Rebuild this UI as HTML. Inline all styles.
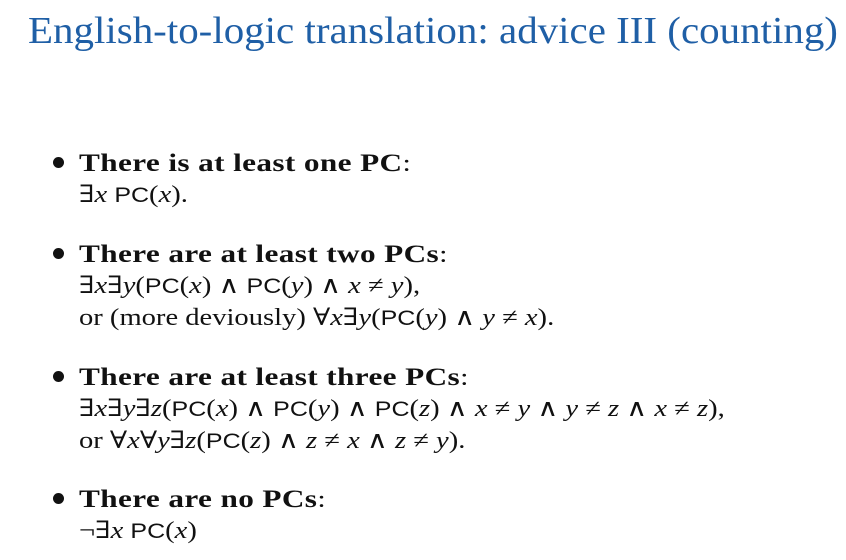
<!DOCTYPE html>
<html><head><meta charset="utf-8"><style>
body{margin:0;width:846px;height:560px;background:#fff;overflow:hidden;font-family:"Liberation Serif","DejaVu Serif",serif;color:#111;position:relative}
.t{position:absolute;left:28px;top:9px;font-size:38px;color:#1f5fa6;white-space:nowrap;transform:scaleX(1.078);transform-origin:left}
.l{position:absolute;left:79px;white-space:nowrap;font-size:24px;line-height:30px;transform:scaleX(1.19);transform-origin:left}
.hl{transform:scaleX(1.25)}
.h{font-size:25px;font-weight:bold;letter-spacing:0.3px}
.b{position:absolute;left:53px;width:11px;height:11px;border-radius:50%;background:#111}
i{font-style:italic}
.s{font-family:"Liberation Sans",sans-serif;font-size:21px}
</style></head><body>
<div class="t">English-to-logic translation: advice III (counting)</div>

<div class="b" style="top:157px"></div>
<div class="l hl" style="top:149px"><span class="h">There is at least one PC</span>:</div>
<div class="l" style="top:180px">∃<i>x</i> <span class="s">PC</span>(<i>x</i>).</div>

<div class="b" style="top:248px"></div>
<div class="l hl" style="top:240px"><span class="h">There are at least two PCs</span>:</div>
<div class="l" style="top:271px">∃<i>x</i>∃<i>y</i>(<span class="s">PC</span>(<i>x</i>) ∧ <span class="s">PC</span>(<i>y</i>) ∧ <i>x</i> ≠ <i>y</i>),</div>
<div class="l" style="top:303px">or (more deviously) ∀<i>x</i>∃<i>y</i>(<span class="s">PC</span>(<i>y</i>) ∧ <i>y</i> ≠ <i>x</i>).</div>

<div class="b" style="top:371px"></div>
<div class="l hl" style="top:363px"><span class="h">There are at least three PCs</span>:</div>
<div class="l" style="top:394px">∃<i>x</i>∃<i>y</i>∃<i>z</i>(<span class="s">PC</span>(<i>x</i>) ∧ <span class="s">PC</span>(<i>y</i>) ∧ <span class="s">PC</span>(<i>z</i>) ∧ <i>x</i> ≠ <i>y</i> ∧ <i>y</i> ≠ <i>z</i> ∧ <i>x</i> ≠ <i>z</i>),</div>
<div class="l" style="top:426px">or ∀<i>x</i>∀<i>y</i>∃<i>z</i>(<span class="s">PC</span>(<i>z</i>) ∧ <i>z</i> ≠ <i>x</i> ∧ <i>z</i> ≠ <i>y</i>).</div>

<div class="b" style="top:493px"></div>
<div class="l hl" style="top:485px"><span class="h">There are no PCs</span>:</div>
<div class="l" style="top:516px">¬∃<i>x</i> <span class="s">PC</span>(<i>x</i>)</div>
</body></html>
